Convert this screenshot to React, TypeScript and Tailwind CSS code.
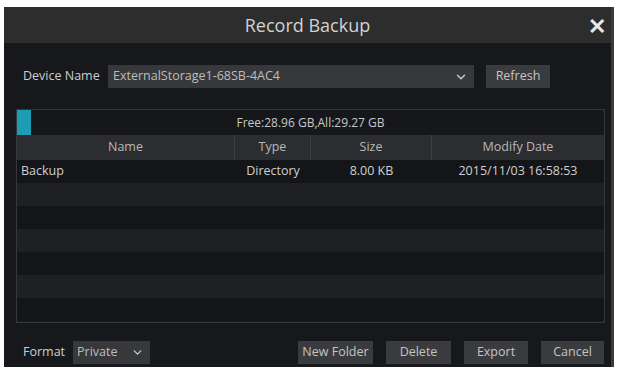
import { ChevronDown } from "lucide-react"

const rows = [
  { name: "Backup", type: "Directory", size: "8.00 KB", date: "2015/11/03 16:58:53" },
  null,
  null,
  null,
  null,
  null,
  null,
]

function Btn({ label, w }: { label: string; w: string }) {
  return (
    <div className={`flex h-[23px] items-center justify-center bg-[#3a3b3e] text-[12.5px] text-[#c4c4c4] ${w}`}>
      {label}
    </div>
  )
}

export default function App() {
  return (
    <div className="h-[367px] w-[618px] overflow-hidden bg-white pl-[4px] pt-[7px]" style={{ fontFamily: '"Open Sans", "Noto Sans", sans-serif' }}>
      <div className="flex h-[360px] w-[610px] flex-col border-r-[3px] border-[#3a3a3a] bg-[#17181b]">
        {/* title bar */}
        <div className="relative flex h-[36px] shrink-0 items-center justify-center bg-[#2d2d2d]">
          <span className="text-[18px] text-[#d2d2d2]">Record Backup</span>
          <span className="absolute right-[5px] top-[7px] text-[22px] font-bold leading-none text-[#e8e8e8]">✕</span>
        </div>

        {/* device row */}
        <div className="mt-[22px] flex items-center pl-[19px]">
          <span className="w-[85px] text-[12.5px] text-[#cfcfcf]">Device Name</span>
          <div className="flex h-[23px] w-[366px] items-center justify-between bg-[#37383b] pl-[5px] pr-[6px]">
            <span className="text-[12.5px] text-[#bdbdbd]">ExternalStorage1-68SB-4AC4</span>
            <ChevronDown className="h-[14px] w-[14px] text-[#c8c8c8]" strokeWidth={2.5} />
          </div>
          <div className="ml-[12px]">
            <Btn label="Refresh" w="w-[64px]" />
          </div>
        </div>

        {/* table */}
        <div className="ml-[12px] mr-[6px] mt-[21px] flex h-[214px] flex-col border border-[#35373b] bg-[#1b1c20]">
          <div className="relative flex h-[25px] shrink-0 items-center justify-center bg-[#16171a]">
            <div className="absolute left-0 top-0 h-full w-[14px] bg-[#1d9db3]" />
            <span className="text-[12px] text-[#c8c8c8]">Free:28.96 GB,All:29.27 GB</span>
          </div>
          <div className="grid h-[25px] shrink-0 grid-cols-[218px_76px_121px_1fr] bg-[#2c2d31] text-[12.5px] text-[#b8b8b8]">
            <div className="flex items-center justify-center border-r border-[#3e4044]">Name</div>
            <div className="flex items-center justify-center border-r border-[#3e4044]">Type</div>
            <div className="flex items-center justify-center border-r border-[#3e4044]">Size</div>
            <div className="flex items-center justify-center">Modify Date</div>
          </div>
          {rows.map((r, i) => (
            <div
              key={i}
              className={`grid h-[23px] shrink-0 grid-cols-[218px_76px_121px_1fr] text-[12.5px] text-[#d0d0d0] ${i % 2 === 0 ? "bg-[#141519]" : "bg-[#1f2024]"}`}
            >
              {r && (
                <>
                  <div className="flex items-center pl-[4px]">{r.name}</div>
                  <div className="flex items-center justify-center">{r.type}</div>
                  <div className="flex items-center justify-center">{r.size}</div>
                  <div className="flex items-center justify-center">{r.date}</div>
                </>
              )}
            </div>
          ))}
        </div>

        {/* bottom row */}
        <div className="mt-[18px] flex items-center pl-[19px] pr-[7px]">
          <span className="w-[50px] text-[12.5px] text-[#cfcfcf]">Format</span>
          <div className="flex h-[23px] w-[77px] items-center justify-between bg-[#37383b] pl-[4px] pr-[6px]">
            <span className="text-[12.5px] text-[#bdbdbd]">Private</span>
            <ChevronDown className="h-[13px] w-[13px] text-[#c8c8c8]" strokeWidth={2.5} />
          </div>
          <div className="ml-auto flex gap-[13px]">
            <Btn label="New Folder" w="w-[75px]" />
            <Btn label="Delete" w="w-[65px]" />
            <Btn label="Export" w="w-[64px]" />
            <Btn label="Cancel" w="w-[63px]" />
          </div>
        </div>
      </div>
    </div>
  )
}
